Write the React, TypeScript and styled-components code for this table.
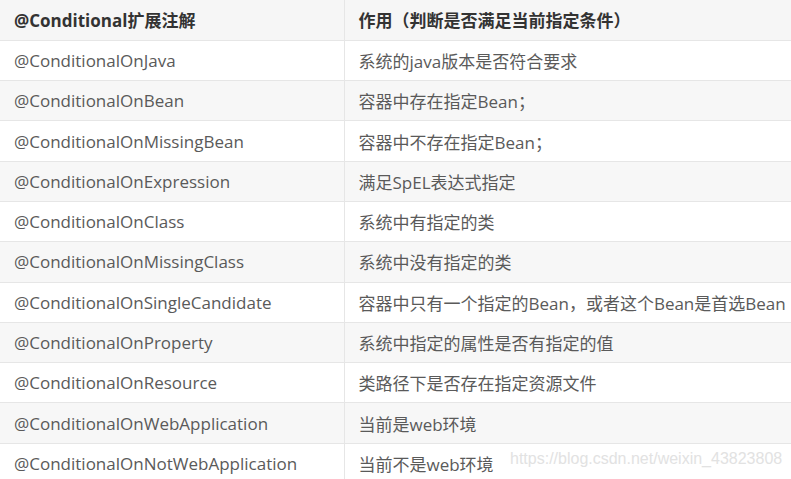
import styled, { createGlobalStyle } from "styled-components";

const GlobalStyle = createGlobalStyle`
  html, body {
    margin: 0;
    padding: 0;
    background: #ffffff;
    overflow: hidden;
  }
`;

const Page = styled.div`
  position: relative;
  width: 791px;
  height: 479px;
  overflow: hidden;
  font-family: "Open Sans", "Noto Sans CJK SC", sans-serif;
`;

const Table = styled.table`
  width: 820px;
  border-collapse: collapse;
  table-layout: fixed;
`;

const HeadCell = styled.th<{ $w?: number }>`
  box-sizing: border-box;
  width: ${(p) => (p.$w ? `${p.$w}px` : "auto")};
  height: 40.3px;
  padding: 0 14px;
  text-align: left;
  font-weight: 700;
  font-size: 17px;
  color: #333333;
  background: #f6f6f6;
  border-bottom: 1px solid #e6e6e6;
  border-right: 1px solid #e6e6e6;
  white-space: nowrap;
`;

const Row = styled.tr<{ $alt: boolean }>`
  background: ${(p) => (p.$alt ? "#f7f7f7" : "#ffffff")};
`;

const Cell = styled.td`
  box-sizing: border-box;
  height: 40.3px;
  padding: 0 14px;
  font-size: 17px;
  color: #5a5a5a;
  border-bottom: 1px solid #e6e6e6;
  border-right: 1px solid #e6e6e6;
  white-space: nowrap;
`;

const Watermark = styled.div`
  position: absolute;
  left: 510px;
  top: 450px;
  font-family: "Liberation Sans", Arial, sans-serif;
  font-size: 16px;
  color: #e2e2e2;
`;

const rows: [string, string][] = [
  ["@ConditionalOnJava", "系统的java版本是否符合要求"],
  ["@ConditionalOnBean", "容器中存在指定Bean；"],
  ["@ConditionalOnMissingBean", "容器中不存在指定Bean；"],
  ["@ConditionalOnExpression", "满足SpEL表达式指定"],
  ["@ConditionalOnClass", "系统中有指定的类"],
  ["@ConditionalOnMissingClass", "系统中没有指定的类"],
  ["@ConditionalOnSingleCandidate", "容器中只有一个指定的Bean，或者这个Bean是首选Bean"],
  ["@ConditionalOnProperty", "系统中指定的属性是否有指定的值"],
  ["@ConditionalOnResource", "类路径下是否存在指定资源文件"],
  ["@ConditionalOnWebApplication", "当前是web环境"],
  ["@ConditionalOnNotWebApplication", "当前不是web环境"],
];

export default function App() {
  return (
    <Page>
      <GlobalStyle />
      <Table>
        <thead>
          <tr>
            <HeadCell $w={344}>@Conditional扩展注解</HeadCell>
            <HeadCell>作用（判断是否满足当前指定条件）</HeadCell>
          </tr>
        </thead>
        <tbody>
          {rows.map(([name, desc], i) => (
            <Row key={name} $alt={i % 2 === 1}>
              <Cell>{name}</Cell>
              <Cell>{desc}</Cell>
            </Row>
          ))}
        </tbody>
      </Table>
      <Watermark>https://blog.csdn.net/weixin_43823808</Watermark>
    </Page>
  );
}
